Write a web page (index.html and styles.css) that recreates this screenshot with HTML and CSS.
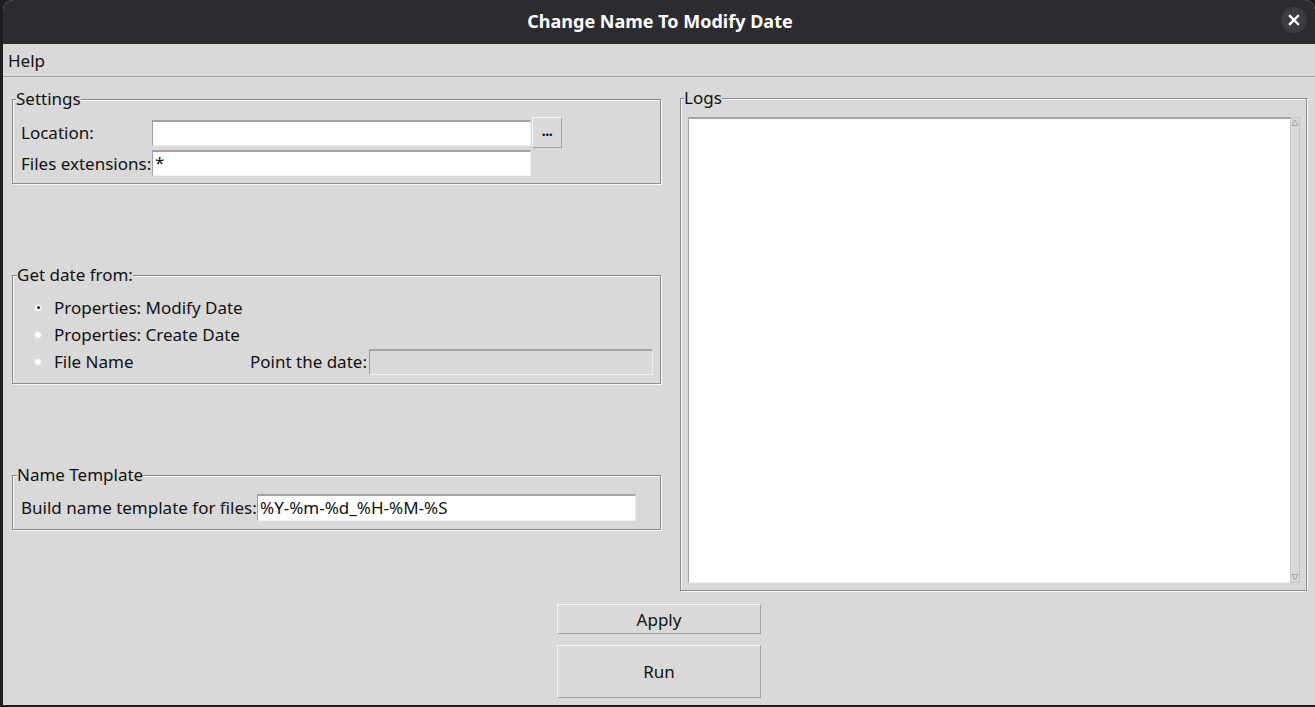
FILE: index.html
```html
<!DOCTYPE html>
<html>
<head>
<meta charset="utf-8">
<link rel="stylesheet" href="styles.css">
</head>
<body>
<div class="window">
  <div class="titlebar">
    <span class="title">Change Name To Modify Date</span>
    <span class="close"><svg width="12" height="12" viewBox="0 0 12 12"><path d="M2 2 L10 10 M10 2 L2 10" stroke="#fff" stroke-width="2.4" stroke-linecap="square"/></svg></span>
  </div>
  <div class="menubar"><span class="menu">Help</span></div>
  <div class="main">
    <div class="left">
      <fieldset class="frame settings">
        <legend>Settings</legend>
        <div class="row r1">
          <span class="lbl w131">Location:</span>
          <span class="entry w379"></span>
          <span class="btn dots">...</span>
        </div>
        <div class="row r2">
          <span class="lbl w131">Files extensions:</span>
          <span class="entry w379">*</span>
        </div>
      </fieldset>
      <fieldset class="frame getdate">
        <legend>Get date from:</legend>
        <div class="radio"><span class="dot on"></span><span>Properties: Modify Date</span></div>
        <div class="radio"><span class="dot"></span><span>Properties: Create Date</span></div>
        <div class="radio"><span class="dot"></span><span class="w196">File Name</span><span class="lbl w119">Point the date:</span><span class="entry disabled w284"></span></div>
      </fieldset>
      <fieldset class="frame template">
        <legend>Name Template</legend>
        <div class="row r3">
          <span class="lbl w236">Build name template for files:</span>
          <span class="entry w379">%Y-%m-%d_%H-%M-%S</span>
        </div>
      </fieldset>
    </div>
    <div class="right">
      <fieldset class="frame logs">
        <legend>Logs</legend>
        <div class="logbox">
          <div class="text"></div>
          <div class="scroll">
            <svg class="arr" width="8" height="8" viewBox="0 0 8 8"><path d="M1 6.5 L4 1 L7 6.5 Z" fill="none" stroke="#a8a8a8" stroke-width="1"/></svg>
            <svg class="arr" width="8" height="8" viewBox="0 0 8 8"><path d="M1 1.5 L4 7 L7 1.5 Z" fill="none" stroke="#a8a8a8" stroke-width="1"/></svg>
          </div>
        </div>
      </fieldset>
    </div>
  </div>
  <div class="buttons">
    <span class="btn big apply">Apply</span>
    <span class="btn big run">Run</span>
  </div>
</div>
</body>
</html>
```

FILE: styles.css
```css
html, body {
  margin: 0;
  padding: 0;
}
body {
  background: #1d1d20;
  width: 1315px;
  height: 707px;
  overflow: hidden;
  font-family: "Noto Sans", "DejaVu Sans", sans-serif;
  font-size: 17px;
  color: #111;
}
.window {
  margin-left: 3px;
  width: 1312px;
  height: 705px;
  background: #d9d9d9;
  border-radius: 10px 10px 0 0;
  overflow: hidden;
}
.titlebar {
  height: 44px;
  background: #2c2b30;
  display: flex;
  align-items: center;
  justify-content: center;
  position: relative;
}
.title {
  color: #fff;
  font-weight: bold;
  font-size: 18px;
  margin-left: 2px;
  margin-top: -2px;
}
.close {
  position: absolute;
  right: 8px;
  top: 7px;
  width: 26px;
  height: 26px;
  border-radius: 50%;
  background: #3d3c42;
  display: flex;
  align-items: center;
  justify-content: center;
}
.menubar {
  height: 32px;
  border-bottom: 1px solid #a2a2a2;
  display: flex;
  align-items: center;
  padding-left: 5px;
}
.main {
  display: flex;
  align-items: flex-start;
}
.left {
  margin-left: 9px;
  width: 649px;
  display: flex;
  flex-direction: column;
}
.right {
  margin-left: 19px;
  width: 627px;
}
.frame {
  margin: 0;
  border: 1px solid #8c8c8c;
  box-shadow: inset 1px 1px 0 #f7f7f7, 1px 1px 0 #f7f7f7;
  padding: 8px 8px 7px 8px;
  min-width: 0;
}
.frame legend {
  padding: 0;
  margin-left: -5px;
  line-height: 22px;
  background: #d9d9d9;
}
.settings {
  margin-top: 11px;
  padding-top: 7px;
}
.getdate {
  margin-top: 80px;
  padding-bottom: 8px;
}
.getdate legend, .template legend, .logs legend {
  margin-left: -4px;
}
.template {
  margin-top: 80px;
  padding-bottom: 8px;
}
.logs {
  margin-top: 10px;
  padding: 8px 6px 7px 7px;
}
.row {
  display: flex;
  align-items: center;
}
.r1 { height: 31px; }
.r2 { height: 26px; margin-top: 2px; }
.r3 { height: 27px; }
.lbl { white-space: nowrap; }
.w131 { width: 131px; flex: none; }
.w119 { width: 119px; flex: none; }
.w196 { width: 196px; flex: none; }
.w236 { width: 236px; flex: none; }
.w379 { width: 379px; }
.w284 { width: 284px; }
.entry {
  box-sizing: border-box;
  height: 26px;
  background: #fff;
  border: 1px solid #a0a0a0;
  border-top: 2px solid #a3a3a3;
  border-right-color: #ededed;
  border-bottom-color: #f1f1f1;
  padding-left: 2px;
  line-height: 22px;
  flex: none;
  white-space: nowrap;
}
.r3 .entry { height: 27px; line-height: 23px; }
.entry.disabled {
  background: #d9d9d9;
}
.btn {
  box-sizing: border-box;
  display: flex;
  align-items: center;
  justify-content: center;
  background: #d9d9d9;
  border: 1px solid #a3a3a3;
  border-top-color: #f6f6f6;
  border-left-color: #f6f6f6;
  flex: none;
}
.dots {
  width: 30px;
  height: 31px;
  margin-left: 1px;
  font-size: 14px;
  font-weight: bold;
  padding-bottom: 4px;
  letter-spacing: -0.5px;
}
.radio {
  height: 27px;
  display: flex;
  align-items: center;
  padding-left: 13px;
}
.dot {
  box-sizing: border-box;
  width: 8px;
  height: 8px;
  border-radius: 50%;
  background: #fff;
  border: 1px solid #e0e0e0;
  margin-right: 12px;
  flex: none;
  display: flex;
  align-items: center;
  justify-content: center;
}
.dot.on::after {
  content: "";
  width: 3px;
  height: 3px;
  border-radius: 50%;
  background: #111;
}
.logbox {
  display: flex;
  height: 466px;
}
.text {
  flex: 1;
  background: #fff;
  border: 1px solid #a0a0a0;
  border-top: 2px solid #a3a3a3;
  border-right: none;
  border-bottom-color: #f1f1f1;
}
.scroll {
  box-sizing: border-box;
  width: 10px;
  background: #d9d9d9;
  border: 1px solid #c4c4c4;
  display: flex;
  flex-direction: column;
  justify-content: space-between;
  align-items: center;
  padding: 1px 0;
}
.buttons {
  display: flex;
  flex-direction: column;
  align-items: center;
  margin-top: 13px;
  gap: 11px;
}
.big {
  width: 204px;
}
.apply { height: 30px; }
.run { height: 53px; }
```
